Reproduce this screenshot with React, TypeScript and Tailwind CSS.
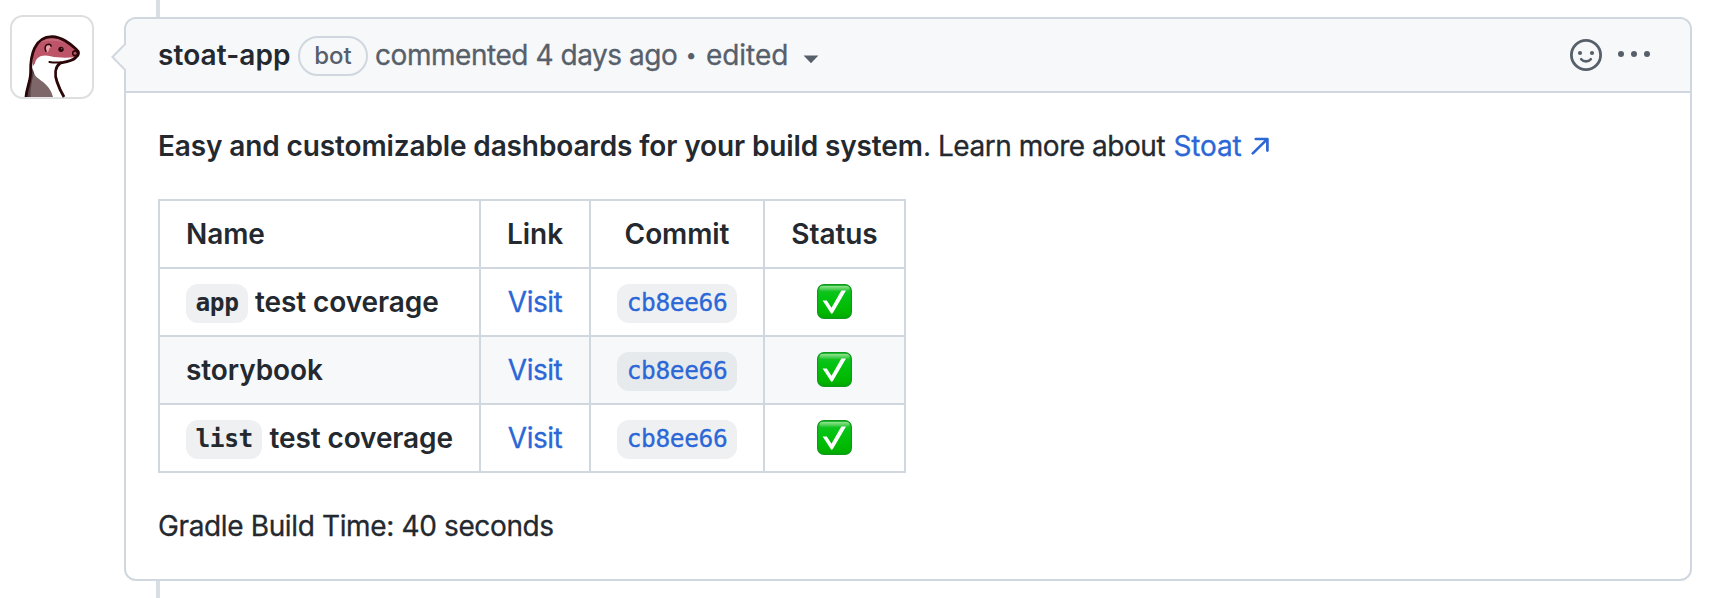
import type { ReactNode } from "react";

function StoatAvatar() {
  return (
    <svg viewBox="30 45 252 252" className="block h-full w-full" fill="none" strokeLinecap="round" strokeLinejoin="round">
      <path
        d="M77 292C79 262 91 245 92 215C91 165 103 111 156 110C186 111 208 130 229 148C238 155 238 166 227 173C215 184 197 186 181 189C164 201 164 225 171 245C177 263 184 277 193 292Z"
        fill="#fff"
      />
      <path
        d="M99 198C93 150 113 111 156 110C186 111 208 130 229 148C236 154 236 166 225 172C200 174 172 174 152 169C125 161 108 172 105 190Z"
        fill="#bd5468"
      />
      <path d="M116 130C138 108 172 110 200 130C175 121 142 119 116 130Z" fill="#c96a7b" />
      <path d="M77 291C80 262 91 245 93 205L102 218C107 240 148 244 159 291Z" fill="#7d6769" />
      <path d="M80 291C83 262 95 245 97 203L102 218C94 250 91 270 92 291Z" fill="#554143" />
      <path
        d="M78 291C80 262 92 245 92 215C91 165 103 111 156 110C186 111 208 130 229 148C238 155 238 166 227 173C215 184 197 186 181 189C164 201 164 225 171 245C177 263 184 277 192 291"
        stroke="#2b0608"
        strokeWidth="8.5"
        strokeLinecap="butt"
      />
      <path d="M148 186C160 188 170 188 184 187" stroke="#2b0608" strokeWidth="5.5" />
      <path d="M138 154C132 143 136 134 146 133C155 133 155 141 149 145C145 149 148 155 142 157Z" fill="#e9a3ae" />
      <path d="M138 154C132 143 136 134 146 133C150 133 153 135 153 139" stroke="#2b0608" strokeWidth="4.5" />
      <circle cx="183" cy="148" r="8" fill="#2b0608" />
      <circle cx="185" cy="146" r="2" fill="#9a6670" />
      <circle cx="226" cy="160" r="10" fill="#2b0608" />
      <circle cx="225" cy="160" r="4.5" fill="#bd5468" />
    </svg>
  );
}

function CheckMark() {
  return (
    <svg viewBox="0 0 35 35" className="mb-[2px] h-[35px] w-[35px]" aria-label="passed">
      <defs>
        <linearGradient id="tile" x1="0" y1="0" x2="0" y2="1">
          <stop offset="0" stopColor="#2fbf3a" />
          <stop offset="0.3" stopColor="#05c414" />
          <stop offset="0.8" stopColor="#00b800" />
          <stop offset="1" stopColor="#00a800" />
        </linearGradient>
        <linearGradient id="gloss" x1="0" y1="0" x2="0" y2="1">
          <stop offset="0" stopColor="#8fe38f" />
          <stop offset="1" stopColor="#8fe38f" stopOpacity="0.1" />
        </linearGradient>
      </defs>
      <rect x="0.6" y="0.6" width="33.8" height="33.8" rx="6.5" fill="url(#tile)" stroke="#0f9a1c" strokeWidth="1.2" />
      <rect x="2.5" y="2" width="30" height="5" rx="2.5" fill="url(#gloss)" />
      <path d="M5.6 16.4H9.8L14.5 23.8L24.3 6.6H29L16 28.8Q14.8 30.6 13.6 28.8Z" fill="#fff" />
    </svg>
  );
}

function Code({ children, className = "" }: { children: ReactNode; className?: string }) {
  return (
    <code
      className={`relative -top-px rounded-[12px] px-[9.5px] pt-[3.6px] pb-[5.6px] font-['DejaVu_Sans_Mono',monospace] text-[24.5px] leading-none tracking-[-0.38px] ${className}`}
    >
      {children}
    </code>
  );
}

const rows = [
  { code: "app", label: "test coverage", commit: "cb8ee66" },
  { code: "", label: "storybook", commit: "cb8ee66" },
  { code: "list", label: "test coverage", commit: "cb8ee66" },
];

const cell = "h-[68px] border-2 border-[#d0d7de] p-0 align-middle";

export default function App() {
  return (
    <div className="relative flex h-[598px] w-[1714px] items-start overflow-hidden bg-white pl-[10px] font-['Inter',sans-serif] text-[28px] leading-[42px] text-[#24292f]">
      <div className="absolute top-0 left-[156px] h-full w-[4px] bg-[#d8dee4]" />

      <div className="mt-[15px] h-[84px] w-[84px] shrink-0 overflow-hidden rounded-[13px] bg-white shadow-[inset_0_0_0_2px_#dddedf]">
        <StoatAvatar />
      </div>

      <article className="relative mt-[17px] ml-[30px] h-[564px] w-[1568px] shrink-0 rounded-[12px] border-2 border-[#d0d7de] bg-white">
        <svg viewBox="0 0 16 30" className="absolute top-[23px] -left-[15px] h-[30px] w-[16px]">
          <path d="M16 0.6L1.4 15L16 29.4Z" fill="#f6f8fa" />
          <path d="M14.6 1.6L1.4 15L14.6 28.4" fill="none" stroke="#d0d7de" strokeWidth="2" />
        </svg>

        <header className="flex h-[74px] items-center rounded-t-[10px] border-b-2 border-[#d0d7de] bg-[#f6f8fa] pr-[40px] pl-[32px] whitespace-nowrap text-[#57606a]">
          <strong className="w-[140px] font-semibold tracking-[0.08px] text-[#24292f]">stoat-app</strong>
          <span className="relative top-px flex h-[40px] w-[70px] items-center justify-center rounded-full border-2 border-[#d0d7de] text-[24px] font-medium">
            bot
          </span>
          <span className="ml-[7px] w-[301px] tracking-[-0.455px] [-webkit-text-stroke:0.3px]">commented 4 days ago</span>
          <span className="w-[30px] text-center text-[20px]">•</span>
          <span className="w-[97px] tracking-[-0.05px] [-webkit-text-stroke:0.3px]">edited</span>
          <svg viewBox="0 0 16 9" className="mt-[9px] h-[9px] w-[16px]">
            <path d="M0.6 0.4H15.4L8 8.2Z" fill="#57606a" />
          </svg>
          <div className="ml-auto flex items-center gap-[16px]">
            <svg viewBox="0 0 32 32" className="h-[32px] w-[32px]" fill="none" stroke="#57606a">
              <circle cx="16" cy="16" r="14.6" strokeWidth="2.8" />
              <circle cx="10" cy="14" r="2.1" fill="#57606a" stroke="none" />
              <circle cx="22" cy="14" r="2.1" fill="#57606a" stroke="none" />
              <path d="M11.2 20.2Q13 22.4 16 22.4Q19 22.4 20.8 20.2" strokeWidth="2.6" strokeLinecap="round" />
            </svg>
            <svg viewBox="0 0 32 6" className="mb-[2px] h-[6px] w-[32px]" fill="#57606a">
              <circle cx="3" cy="3" r="3" />
              <circle cx="16" cy="3" r="3" />
              <circle cx="29" cy="3" r="3" />
            </svg>
          </div>
        </header>

        <div className="flex flex-col gap-[32px] px-[32px] pt-[32px] whitespace-nowrap">
          <p className="flex">
            <strong className="w-[765px] font-semibold tracking-[-0.125px]">
              Easy and customizable dashboards for your build system
            </strong>
            <span className="w-[15px]">.</span>
            <span className="w-[235.5px] tracking-[-0.46px] [-webkit-text-stroke:0.3px]">Learn more about</span>
            <a className="flex items-center text-[#2b67d6]">
              <span className="tracking-[-0.15px] [-webkit-text-stroke:0.3px]">Stoat</span>
              <svg viewBox="0 0 18 18" className="ml-[9px] h-[18px] w-[18px]" fill="none" stroke="#2b67d6" strokeWidth="2.7" strokeLinecap="round" strokeLinejoin="round">
                <path d="M1.8 16.4L16 2.4M4.8 2H16.4V13.6" />
              </svg>
            </a>
          </p>

          <table className="w-[748px] table-fixed border-collapse">
            <colgroup>
              <col className="w-[321px]" />
              <col className="w-[110px]" />
              <col className="w-[174px]" />
              <col className="w-[141px]" />
            </colgroup>
            <thead>
              <tr>
                <th className={`${cell} pl-[26px] text-left font-semibold tracking-[-0.1px]`}>Name</th>
                <th className={`${cell} text-center font-semibold`}>Link</th>
                <th className={`${cell} text-center font-semibold tracking-[-0.08px]`}>Commit</th>
                <th className={`${cell} text-center font-semibold tracking-[-0.05px]`}>Status</th>
              </tr>
            </thead>
            <tbody>
              {rows.map((row, i) => (
                <tr key={i} className={i === 1 ? "bg-[#f6f8fa]" : "bg-white"}>
                  <td className={`${cell} pl-[26px] font-semibold tracking-[-0.1px]`}>
                    {row.code && (
                      <>
                        <Code className="bg-[#eff0f2] font-bold">{row.code}</Code>{" "}
                      </>
                    )}
                    {row.label}
                  </td>
                  <td className={`${cell} text-center tracking-[-0.5px] text-[#2b67d6] [-webkit-text-stroke:0.3px]`}>Visit</td>
                  <td className={`${cell} text-center text-[#2b67d6] [-webkit-text-stroke:0.3px]`}>
                    <Code className={i === 1 ? "bg-[#e7eaed]" : "bg-[#eff0f2]"}>{row.commit}</Code>
                  </td>
                  <td className={cell}>
                    <div className="flex justify-center">
                      <CheckMark />
                    </div>
                  </td>
                </tr>
              ))}
            </tbody>
          </table>

          <p className="tracking-[-0.365px] [-webkit-text-stroke:0.3px]">Gradle Build Time: 40 seconds</p>
        </div>
      </article>
    </div>
  );
}
